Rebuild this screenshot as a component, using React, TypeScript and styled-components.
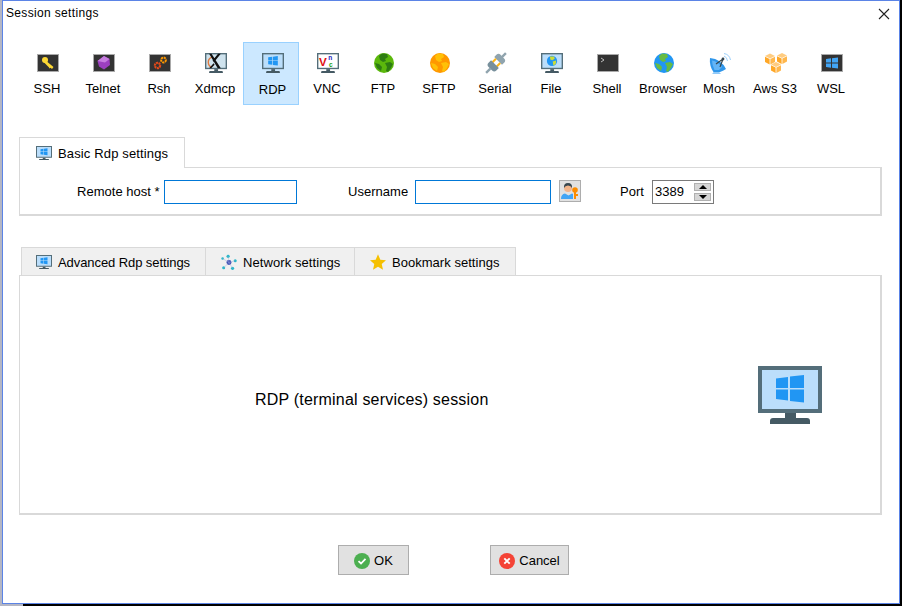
import React from "react";
import styled, { createGlobalStyle } from "styled-components";

const Global = createGlobalStyle`
  html, body { margin: 0; padding: 0; background: #000; }
  body { font-family: "Liberation Sans", Arial, sans-serif; font-size: 13px; color: #000; }
  * { box-sizing: border-box; }
`;

const Desktop = styled.div`
  width: 902px;
  height: 606px;
  overflow: hidden;
  padding-left: 2px;
  background: linear-gradient(90deg, #b4b6c4 0, #b4b6c4 23px, #000 23px);
`;
const Win = styled.div`
  width: 898px;
  height: 604px;
  background: #fff;
  border: 1px solid #5b84e6;
  display: flex;
  flex-direction: column;
`;
const TitleBar = styled.div`
  height: 41px;
  flex: none;
  display: flex;
  justify-content: space-between;
  align-items: flex-start;
  padding: 5px 8px 0 3px;
`;
const Title = styled.div`
  font-size: 12px;
  line-height: 15px;
  letter-spacing: 0.34px;
`;
const CloseButton = styled.div`
  width: 14px;
  height: 14px;
  margin-top: 1px;
  display: flex;
`;
const Strip = styled.div`
  height: 63px;
  flex: none;
  display: flex;
  padding-left: 16px;
`;
const Tool = styled.div<{ $on?: boolean }>`
  width: 56px;
  height: 63px;
  flex: none;
  display: flex;
  flex-direction: column;
  align-items: center;
  padding-top: 10px;
  padding-left: ${(p) => (p.$on ? 3 : 0)}px;
  background: ${(p) => (p.$on ? "#cce8ff" : "transparent")};
  box-shadow: ${(p) => (p.$on ? "inset 0 0 0 1px #99d1ff" : "none")};
`;
const ToolIcon = styled.div<{ $on?: boolean }>`
  width: 26px;
  height: 22px;
  margin-left: ${(p) => (p.$on ? 1 : 2)}px;
  display: flex;
  align-items: center;
  justify-content: center;
`;
const ToolLabel = styled.div<{ $on?: boolean }>`
  margin-top: ${(p) => (p.$on ? 8 : 7)}px;
  line-height: 16px;
  white-space: nowrap;
  letter-spacing: 0.02px;
`;
const TabBar = styled.div<{ $top: number; $left: number }>`
  display: flex;
  flex: none;
  margin: ${(p) => p.$top}px 0 0 ${(p) => p.$left}px;
  position: relative;
  z-index: 1;
`;
const Tab = styled.div<{ $active?: boolean; $w: number; $track: number }>`
  width: ${(p) => p.$w}px;
  height: ${(p) => (p.$active ? 31 : 29)}px;
  display: flex;
  align-items: center;
  gap: 6px;
  padding-left: ${(p) => (p.$active ? 16 : 15)}px;
  padding-top: ${(p) => (p.$active ? 0 : 1)}px;
  background: ${(p) => (p.$active ? "#fff" : "#f0f0f0")};
  border: 1px solid #d9d9d9;
  border-left-width: ${(p) => (p.$active ? 1 : 0)}px;
  border-bottom: ${(p) => (p.$active ? "none" : "1px solid #d9d9d9")};
  letter-spacing: ${(p) => p.$track}px;
  &:first-child:not(:only-child) { border-left-width: 1px; padding-left: 14px; }
`;
const Panel = styled.div<{ $h: number }>`
  margin: -1px 0 0 16px;
  width: 863px;
  height: ${(p) => p.$h}px;
  flex: none;
  border: 1px solid #d9d9d9;
  border-right-width: 2px;
  border-bottom-width: 2px;
`;
const Form = styled(Panel)`
  display: flex;
  align-items: flex-start;
  padding-top: 12px;
`;
const FieldLabel = styled.label<{ $w: number; $ml: number }>`
  width: ${(p) => p.$w}px;
  margin-left: ${(p) => p.$ml}px;
  line-height: 23px;
  white-space: nowrap;
  letter-spacing: 0.02px;
`;
const TextInput = styled.input<{ $w: number }>`
  width: ${(p) => p.$w}px;
  height: 24px;
  border: 1px solid #0078d7;
  outline: none;
  background: #fff;
  padding: 0;
`;
const KeyButton = styled.div`
  width: 22px;
  height: 22px;
  margin-left: 8px;
  background: #e1e1e1;
  border: 1px solid #adadad;
  display: flex;
  align-items: center;
  justify-content: center;
`;
const Spin = styled.div`
  width: 62px;
  height: 24px;
  border: 1px solid #7a7a7a;
  display: flex;
  align-items: center;
  justify-content: space-between;
  padding: 0 1px 0 2px;
  line-height: 22px;
`;
const SpinButtons = styled.div`
  width: 17px;
  display: flex;
  flex-direction: column;
  gap: 2px;
  margin-right: 1px;
`;
const SpinBtn = styled.div<{ $up?: boolean }>`
  height: 8px;
  background: #d6d6d6;
  border: 1px solid #b0b0b0;
  display: flex;
  align-items: center;
  justify-content: center;
  &::after {
    content: "";
    width: 0;
    height: 0;
    border-left: 4px solid transparent;
    border-right: 4px solid transparent;
    ${(p) => (p.$up ? "border-bottom: 4px solid #000;" : "border-top: 4px solid #000;")}
  }
`;
const Body = styled(Panel)`
  display: flex;
  align-items: center;
  justify-content: space-between;
  padding: 0 58px 0 235px;
`;
const BodyText = styled.div`
  font-size: 16px;
  letter-spacing: 0.2px;
  margin-top: 11px;
`;
const BigIcon = styled.div`
  display: flex;
  margin-top: 1px;
`;
const Footer = styled.div`
  display: flex;
  flex: none;
  margin: 30px 0 0 335px;
  gap: 81px;
`;
const Btn = styled.div<{ $w: number }>`
  width: ${(p) => p.$w}px;
  height: 30px;
  background: #e1e1e1;
  border: 1px solid #adadad;
  display: flex;
  align-items: center;
  justify-content: center;
  gap: 4px;
  padding-top: 1px;
`;

function WinLogo({ fill = "#2196f3" }: { fill?: string }) {
  return (
    <g fill={fill}>
      <path d="M18 12.5 30 11V22H18z" />
      <path d="M32 10.6 46 9V22H32z" />
      <path d="M18 23.5H30V34.5L18 33z" />
      <path d="M32 23.5H46V36.5L32 35z" />
    </g>
  );
}
function Monitor({ w, children, screen = "#bbdefb" }: { w: number; children?: React.ReactNode; screen?: string }) {
  return (
    <svg width={w} height={(w * 58) / 64} viewBox="0 0 64 58">
      <rect x="0" y="0" width="64" height="47" fill="#546e7a" />
      <rect x="4" y="4" width="56" height="39" fill={screen} />
      <rect x="27" y="47" width="11" height="6" fill="#455a64" />
      <path d="M15 52H49Q52 52 52 55V58H12V55Q12 52 15 52z" fill="#455a64" />
      {children}
    </svg>
  );
}
function DarkBox({ children, w = 22 }: { children?: React.ReactNode; w?: number }) {
  return (
    <svg width={w} height="18" viewBox="0 0 22 18">
      <rect x="0.5" y="0.5" width="21" height="17" fill="#333" stroke="#aaa" />
      {children}
    </svg>
  );
}
function Globe({ sea, land }: { sea: string; land: string }) {
  return (
    <svg width="20" height="20" viewBox="0 0 20 20">
      <circle cx="10" cy="10" r="10" fill={sea} />
      <path d="M8 0.5 13 1 14 4 11 6 12 8 9 9 6 7 5 3z" fill={land} />
      <path d="M11 10 16 9 19 11 17 15 14 19 12 18 13 14z" fill={land} />
      <path d="M1 10 5 11 8 14 7 18 3 15z" fill={land} />
    </svg>
  );
}
function Cube({ x, y }: { x: number; y: number }) {
  return (
    <g transform={`translate(${x} ${y})`}>
      <path d="M5 0 10 2.5 5 5 0 2.5z" fill="#ffcc80" />
      <path d="M0 3.3 4.6 5.6V11L0 8.6z" fill="#ffa726" />
      <path d="M10 3.3 5.4 5.6V11L10 8.6z" fill="#ffb74d" />
    </g>
  );
}
const icons: Record<string, React.ReactNode> = {
  SSH: (
    <DarkBox>
      <g fill="#fdd835">
        <circle cx="8" cy="6" r="3" />
        <path d="M8 6 16.5 13 15 15 13.6 13.8 12.6 14.4 11.8 13.2 6.6 8z" />
      </g>
    </DarkBox>
  ),
  Telnet: (
    <DarkBox>
      <path d="M11 2 16.5 5 17 11 11 15.5 6 12.5 4.5 7z" fill="#9c3fc0" />
      <path d="M11 2 16.5 5 12 8.5 4.5 7z" fill="#c77de0" />
    </DarkBox>
  ),
  Rsh: (
    <DarkBox>
      <circle cx="8.5" cy="11.5" r="2.6" fill="none" stroke="#e64a19" strokeWidth="2.2" strokeDasharray="2 0.6" />
      <circle cx="14.5" cy="6" r="2.4" fill="none" stroke="#ff9800" strokeWidth="2" strokeDasharray="2 0.6" />
    </DarkBox>
  ),
  Xdmcp: (
    <Monitor w={22} screen="#cfe3ee">
      <path d="M20 42A16 16 0 0 1 20 12" fill="none" stroke="#e07a3e" strokeWidth="4" />
      <path d="M19 2 L46 44 H37 L12 2z M46 2 L26 27 22 22 38 2z M25 30 28 34 18 44 H12z" fill="#111" />
    </Monitor>
  ),
  RDP: (
    <Monitor w={22}>
      <WinLogo />
    </Monitor>
  ),
  VNC: (
    <Monitor w={22} screen="#fff">
      <text x="6" y="37" fontFamily="Liberation Sans" fontSize="34" fontWeight="700" fill="#e01010">V</text>
      <text x="33" y="21" fontFamily="Liberation Sans" fontSize="19" fontWeight="700" fill="#1a1ac0">n</text>
      <text x="35" y="41" fontFamily="Liberation Sans" fontSize="19" fontWeight="700" fill="#10a010">c</text>
    </Monitor>
  ),
  FTP: <Globe sea="#5bb80c" land="#2e7d12" />,
  SFTP: <Globe sea="#ff9800" land="#ffc107" />,
  Serial: (
    <svg width="22" height="22" viewBox="0 0 22 22">
      <g transform="rotate(45 11 11)">
        <rect x="9.8" y="-3" width="2.4" height="6" fill="#90a4ae" />
        <path d="M5.5 8V5Q5.5 2 8.5 2H13.5Q16.5 2 16.5 5V8z" fill="#90a4ae" />
        <rect x="7" y="8" width="2" height="5" fill="#fdb515" />
        <rect x="13" y="8" width="2" height="5" fill="#fdb515" />
        <path d="M5.5 12.5H16.5V16Q16.5 19 13.5 19H8.5Q5.5 19 5.5 16z" fill="#78909c" />
        <rect x="9.8" y="19" width="2.4" height="6" fill="#90a4ae" />
      </g>
    </svg>
  ),
  File: (
    <Monitor w={22}>
      <circle cx="32" cy="23" r="15" fill="#2196f3" />
      <path d="M26 10 38 10 40 17 33 21 27 19zM34 25 44 22 43 31 36 37z" fill="#cddc39" />
    </Monitor>
  ),
  Shell: (
    <DarkBox>
      <path d="M4 4 7 6 4 8" fill="none" stroke="#ddd" strokeWidth="0.8" />
    </DarkBox>
  ),
  Browser: <Globe sea="#2196f3" land="#66bb44" />,
  Mosh: (
    <svg width="22" height="22" viewBox="0 0 22 22">
      <path d="M1 6Q12 7 17 17 11 21 5 21 0 14 1 6z" fill="#2f96ea" />
      <path d="M3 8.5Q9 9.5 13 15L10 18 5.5 18Q3 13 3 8.5z" fill="#64b5f6" />
      <path d="M3 22 5 20H10L12 22z" fill="#90caf9" />
      <path d="M7 12 14 7M14 7 11 15" stroke="#37474f" strokeWidth="1.2" fill="none" />
      <circle cx="14" cy="7" r="1.4" fill="#37474f" />
      <path d="M15 4Q18 5 18.5 9M15 1.5Q20.5 2.5 21.5 8" stroke="#90caf9" strokeWidth="0.9" fill="none" />
    </svg>
  ),
  "Aws S3": (
    <svg width="22" height="20" viewBox="0 0 22 20">
      <Cube x={0} y={0.5} />
      <Cube x={12} y={0} />
      <Cube x={6} y={9} />
    </svg>
  ),
  WSL: (
    <DarkBox>
      <path d="M5 5 10 4.3V8.5H5zM11 4.2 17 3.4V8.5H11zM5 9.5H10V13.7L5 13zM11 9.5H17V14.6L11 13.8z" fill="#42a5f5" />
    </DarkBox>
  ),
};

const tools = ["SSH", "Telnet", "Rsh", "Xdmcp", "RDP", "VNC", "FTP", "SFTP", "Serial", "File", "Shell", "Browser", "Mosh", "Aws S3", "WSL"];

function NetIcon() {
  return (
    <svg width="16" height="17" viewBox="0 0 18 18">
      <circle cx="9" cy="9" r="2.8" fill="#3f51b5" />
      <circle cx="8" cy="2" r="1.8" fill="#26b6c8" />
      <circle cx="1.8" cy="4.5" r="1.4" fill="#26b6c8" />
      <circle cx="16" cy="7" r="1.7" fill="#26b6c8" />
      <circle cx="3" cy="15" r="1.7" fill="#26b6c8" />
      <circle cx="13" cy="15.5" r="1.8" fill="#26b6c8" />
      <path d="M9 9 8 2M9 9 1.8 4.5M9 9 16 7M9 9 3 15M9 9 13 15.5" stroke="#9fa8da" strokeWidth="0.5" />
    </svg>
  );
}
function StarIcon() {
  return (
    <svg width="16" height="16" viewBox="0 0 24 23">
      <path d="M12 0 15.5 8 24 8.8 17.6 14.6 19.5 23 12 18.6 4.5 23 6.4 14.6 0 8.8 8.5 8z" fill="#f5c000" />
    </svg>
  );
}
function UserKey() {
  return (
    <svg width="20" height="20" viewBox="0 0 20 20">
      <path d="M1 18Q1 13 5 12.5L8.5 14.5 12 12.5 13 13V18z" fill="#42a5f5" />
      <circle cx="8" cy="7" r="4" fill="#f2b48a" />
      <path d="M4 7Q3.5 2 8 2 12.5 2 12 7 11 4.5 8 4.5 5 4.5 4 7z" fill="#37474f" />
      <circle cx="15" cy="9" r="2.8" fill="#fb8c00" />
      <path d="M14 10H16V18H14zM16 13H18V15H16z" fill="#fb8c00" />
    </svg>
  );
}

export default function App() {
  return (
    <Desktop>
      <Global />
      <Win>
        <TitleBar>
          <Title>Session settings</Title>
          <CloseButton>
            <svg width="14" height="14" viewBox="0 0 14 14">
              <path d="M2 2 12 12M12 2 2 12" stroke="#222" strokeWidth="1.1" />
            </svg>
          </CloseButton>
        </TitleBar>
        <Strip>
          {tools.map((t) => (
            <Tool key={t} $on={t === "RDP"}>
              <ToolIcon $on={t === "RDP"}>{icons[t]}</ToolIcon>
              <ToolLabel $on={t === "RDP"}>{t}</ToolLabel>
            </Tool>
          ))}
        </Strip>
        <TabBar $top={32} $left={16}>
          <Tab $active $w={166} $track={0.14}>
            <Monitor w={16}><WinLogo /></Monitor>
            Basic Rdp settings
          </Tab>
        </TabBar>
        <Form as="div" $h={49}>
          <FieldLabel $ml={57} $w={87}>Remote host *</FieldLabel>
          <TextInput $w={133} />
          <FieldLabel $ml={51} $w={67}>Username</FieldLabel>
          <TextInput $w={136} />
          <KeyButton><UserKey /></KeyButton>
          <FieldLabel $ml={39} $w={32}>Port</FieldLabel>
          <Spin>
            3389
            <SpinButtons>
              <SpinBtn $up />
              <SpinBtn />
            </SpinButtons>
          </Spin>
        </Form>
        <TabBar $top={31} $left={18}>
          <Tab $w={185} $track={-0.08}>
            <Monitor w={16}><WinLogo /></Monitor>
            Advanced Rdp settings
          </Tab>
          <Tab $w={149} $track={0.08}>
            <NetIcon />
            Network settings
          </Tab>
          <Tab $w={161} $track={0.03}>
            <StarIcon />
            Bookmark settings
          </Tab>
        </TabBar>
        <Body $h={240}>
          <BodyText>RDP (terminal services) session</BodyText>
          <BigIcon><Monitor w={64}><WinLogo /></Monitor></BigIcon>
        </Body>
        <Footer>
          <Btn $w={71}>
            <svg width="16" height="16" viewBox="0 0 16 16">
              <circle cx="8" cy="8" r="8" fill="#4caf50" />
              <path d="M4.5 8.2 7 10.5 11.5 5.8" fill="none" stroke="#fff" strokeWidth="1.8" />
            </svg>
            OK
          </Btn>
          <Btn $w={79}>
            <svg width="16" height="16" viewBox="0 0 16 16">
              <circle cx="8" cy="8" r="8" fill="#f44336" />
              <path d="M5.3 5.3 10.7 10.7M10.7 5.3 5.3 10.7" stroke="#fff" strokeWidth="1.9" />
            </svg>
            Cancel
          </Btn>
        </Footer>
      </Win>
    </Desktop>
  );
}
